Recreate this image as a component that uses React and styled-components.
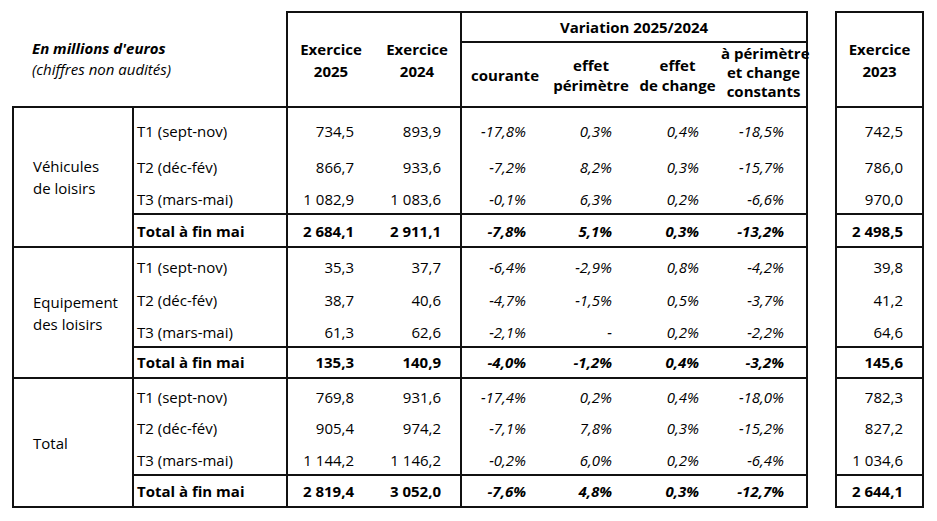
import React from "react";
import styled, { createGlobalStyle, css } from "styled-components";

const GlobalStyle = createGlobalStyle`
  html, body {
    margin: 0;
    padding: 0;
    background: #fff;
  }
  body {
    font-family: "Open Sans", Lato, "Liberation Sans", sans-serif;
    color: #000;
  }
`;

const LINE = "2px solid #111";

const edges = css`
  border-top: ${(p) => (p.$t ? LINE : "none")};
  border-right: ${(p) => (p.$r ? LINE : "none")};
  border-bottom: ${(p) => (p.$b ? LINE : "none")};
  border-left: ${(p) => (p.$l ? LINE : "none")};
`;

const Page = styled.div`
  padding: 11px 0 0 12px;
`;

const Table = styled.table`
  border-collapse: collapse;
  table-layout: fixed;
  width: 910px;
  font-size: 15px;
`;

const Row = styled.tr`
  height: ${(p) => p.$h}px;
`;

const Caption = styled.td`
  padding: 0 0 0 19px;
  vertical-align: middle;
  text-align: left;
  font-style: italic;
  line-height: 21px;

  b {
    font-weight: 700;
  }
`;

const HeadCell = styled.th`
  ${edges};
  padding: 0;
  font-weight: 700;
  text-align: center;
  vertical-align: middle;
  line-height: 22px;
`;

const SubHead = styled.th`
  ${edges};
  padding: 0 0 ${(p) => p.$pb || 0}px;
  font-weight: 700;
  text-align: center;
  vertical-align: middle;
  line-height: ${(p) => p.$lh}px;
  white-space: nowrap;
`;

const Category = styled.td`
  ${edges};
  padding: 0 0 0 19px;
  vertical-align: middle;
  line-height: 22px;
`;

const bodyCell = css`
  ${edges};
  vertical-align: bottom;
  line-height: 20px;
  white-space: nowrap;
  font-weight: ${(p) => (p.$total ? 700 : 400)};
`;

const Period = styled.td`
  ${bodyCell};
  padding: 0 0 ${(p) => (p.$total ? 5 : 4)}px 3px;
`;

const Num = styled.td`
  ${bodyCell};
  text-align: right;
  padding: 0 ${(p) => p.$pr}px ${(p) => (p.$total ? 5 : 4)}px 0;
`;

const Pct = styled.td`
  ${bodyCell};
  text-align: right;
  font-style: italic;
  padding: 0 22px ${(p) => (p.$total ? 5 : 4)}px 0;
`;

const Gap = styled.td`
  padding: 0;
  border: none;
`;

const groups = [
  {
    name: ["Véhicules", "de loisirs"],
    rows: [
      { p: "T1 (sept-nov)", a: "734,5", b: "893,9", v: ["-17,8%", "0,3%", "0,4%", "-18,5%"], c: "742,5", h: 38 },
      { p: "T2 (déc-fév)", a: "866,7", b: "933,6", v: ["-7,2%", "8,2%", "0,3%", "-15,7%"], c: "786,0", h: 36 },
      { p: "T3 (mars-mai)", a: "1 082,9", b: "1 083,6", v: ["-0,1%", "6,3%", "0,2%", "-6,6%"], c: "970,0", h: 33 },
    ],
    total: { a: "2 684,1", b: "2 911,1", v: ["-7,8%", "5,1%", "0,3%", "-13,2%"], c: "2 498,5", h: 33 },
  },
  {
    name: ["Equipement", "des loisirs"],
    rows: [
      { p: "T1 (sept-nov)", a: "35,3", b: "37,7", v: ["-6,4%", "-2,9%", "0,8%", "-4,2%"], c: "39,8", h: 34 },
      { p: "T2 (déc-fév)", a: "38,7", b: "40,6", v: ["-4,7%", "-1,5%", "0,5%", "-3,7%"], c: "41,2", h: 33 },
      { p: "T3 (mars-mai)", a: "61,3", b: "62,6", v: ["-2,1%", "-", "0,2%", "-2,2%"], c: "64,6", h: 33 },
    ],
    total: { a: "135,3", b: "140,9", v: ["-4,0%", "-1,2%", "0,4%", "-3,2%"], c: "145,6", h: 31 },
  },
  {
    name: ["Total"],
    rows: [
      { p: "T1 (sept-nov)", a: "769,8", b: "931,6", v: ["-17,4%", "0,2%", "0,4%", "-18,0%"], c: "782,3", h: 33 },
      { p: "T2 (déc-fév)", a: "905,4", b: "974,2", v: ["-7,1%", "7,8%", "0,3%", "-15,2%"], c: "827,2", h: 31 },
      { p: "T3 (mars-mai)", a: "1 144,2", b: "1 146,2", v: ["-0,2%", "6,0%", "0,2%", "-6,4%"], c: "1 034,6", h: 33 },
    ],
    total: { a: "2 819,4", b: "3 052,0", v: ["-7,6%", "4,8%", "0,3%", "-12,7%"], c: "2 644,1", h: 32 },
  },
];

const colWidths = [120, 154, 87, 87, 87, 86, 87, 86, 29, 87];

function DataRow({ row, first, total, group }) {
  const t = first || total;
  return (
    <Row $h={row.h}>
      {first && (
        <Category rowSpan={4} $t $b $l $r>
          {group.name.map((n) => (
            <div key={n}>{n}</div>
          ))}
        </Category>
      )}
      <Period $t={t} $b={total} $r $total={total}>
        {total ? "Total à fin mai" : row.p}
      </Period>
      <Num $t={t} $b={total} $l $pr={20} $total={total}>
        {row.a}
      </Num>
      <Num $t={t} $b={total} $r $pr={19} $total={total}>
        {row.b}
      </Num>
      {row.v.map((val, i) => (
        <Pct key={i} $t={t} $b={total} $l={i === 0} $r={i === 3} $total={total}>
          {val}
        </Pct>
      ))}
      <Gap />
      <Num $t={t} $b={total} $l $r $pr={19} $total={total}>
        {row.c}
      </Num>
    </Row>
  );
}

export default function App() {
  return (
    <>
      <GlobalStyle />
      <Page>
        <Table>
          <colgroup>
            {colWidths.map((w, i) => (
              <col key={i} style={{ width: w }} />
            ))}
          </colgroup>
          <thead>
            <Row $h={30}>
              <Caption colSpan={2} rowSpan={2}>
                <b>En millions d'euros</b>
                <br />
                (chiffres non audités)
              </Caption>
              <HeadCell rowSpan={2} $t $l $b>
                Exercice
                <br />
                2025
              </HeadCell>
              <HeadCell rowSpan={2} $t $r $b>
                Exercice
                <br />
                2024
              </HeadCell>
              <HeadCell colSpan={4} $t $l $r $b>
                Variation 2025/2024
              </HeadCell>
              <Gap rowSpan={2} />
              <HeadCell rowSpan={2} $t $l $r $b>
                Exercice
                <br />
                2023
              </HeadCell>
            </Row>
            <Row $h={65}>
              <SubHead $l $b $lh={20}>courante</SubHead>
              <SubHead $b $lh={20}>
                effet
                <br />
                périmètre
              </SubHead>
              <SubHead $b $lh={20}>
                effet
                <br />
                de change
              </SubHead>
              <SubHead $r $b $lh={19} $pb={5}>
                à périmètre
                <br />
                et change
                <br />
                constants
              </SubHead>
            </Row>
          </thead>
          <tbody>
            {groups.map((g, gi) => (
              <React.Fragment key={gi}>
                {g.rows.map((r, ri) => (
                  <DataRow key={ri} row={r} first={ri === 0} group={g} />
                ))}
                <DataRow row={g.total} total group={g} />
              </React.Fragment>
            ))}
          </tbody>
        </Table>
      </Page>
    </>
  );
}
